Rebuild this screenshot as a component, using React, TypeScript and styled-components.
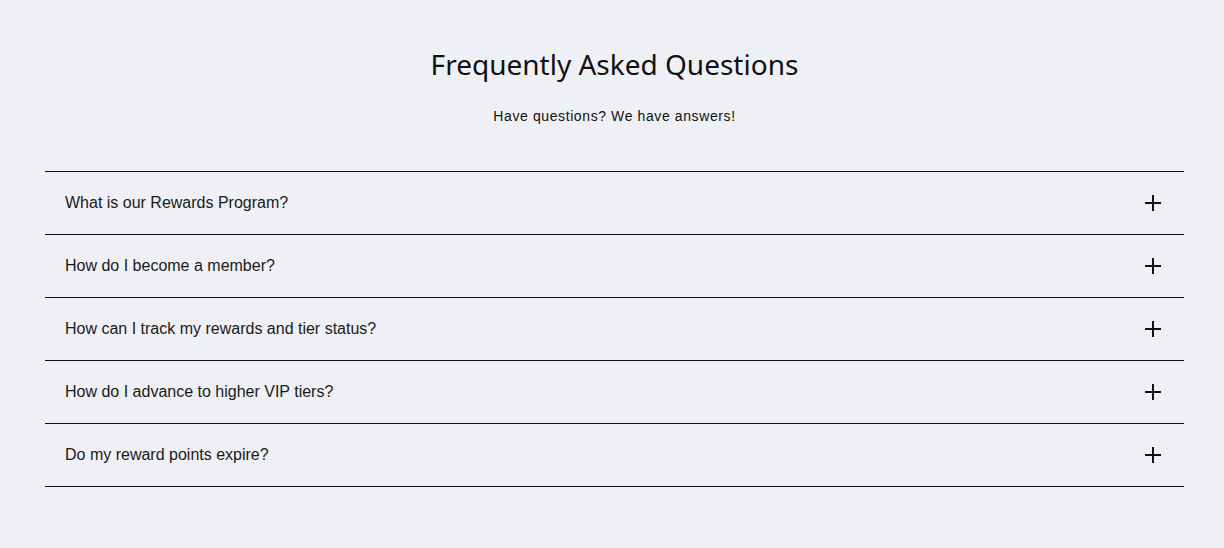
import React, { useState } from 'react';
import styled, { createGlobalStyle } from 'styled-components';

const GlobalStyle = createGlobalStyle`
  body {
    margin: 0;
    background: #eff0f5;
    font-family: 'Liberation Sans', Arial, sans-serif;
    color: #111;
  }
`;

const Page = styled.section`
  padding: 47px 40px 60px 45px;
  min-height: 548px;
  box-sizing: border-box;
`;

const Title = styled.h2`
  margin: 0;
  text-align: center;
  font-family: 'Noto Sans', sans-serif;
  font-weight: 400;
  font-size: 28px;
  line-height: 34px;
  letter-spacing: 0;
  color: #111;
`;

const Subtitle = styled.p`
  margin: 25px 0 0;
  text-align: center;
  font-size: 14px;
  line-height: 20px;
  letter-spacing: 0.6px;
  color: #111;
`;

const List = styled.div`
  margin-top: 45px;
  border-top: 1px solid #111;
`;

const Item = styled.div`
  border-bottom: 1px solid #111;
`;

const Question = styled.button`
  display: flex;
  align-items: center;
  justify-content: space-between;
  width: 100%;
  height: 62px;
  padding: 0 23px 0 20px;
  border: 0;
  background: transparent;
  font-family: 'Liberation Sans', Arial, sans-serif;
  font-size: 16px;
  color: #1a1a1a;
  text-align: left;
  cursor: pointer;
`;

const Answer = styled.div`
  padding: 0 20px 20px;
  font-size: 14px;
  line-height: 22px;
`;

const PlusIcon = ({ open }: { open: boolean }) => (
  <svg width="16" height="16" viewBox="0 0 16 16" aria-hidden="true">
    <path d="M0 8h16" stroke="#111" strokeWidth="2" />
    {!open && <path d="M8 0v16" stroke="#111" strokeWidth="2" />}
  </svg>
);

const faqs = [
  'What is our Rewards Program?',
  'How do I become a member?',
  'How can I track my rewards and tier status?',
  'How do I advance to higher VIP tiers?',
  'Do my reward points expire?',
];

const App = () => {
  const [open, setOpen] = useState<number | null>(null);
  return (
    <>
      <GlobalStyle />
      <Page>
        <Title>Frequently Asked Questions</Title>
        <Subtitle>Have questions? We have answers!</Subtitle>
        <List>
          {faqs.map((q, i) => (
            <Item key={q}>
              <Question onClick={() => setOpen(open === i ? null : i)}>
                <span>{q}</span>
                <PlusIcon open={open === i} />
              </Question>
              {open === i && <Answer>More details coming soon.</Answer>}
            </Item>
          ))}
        </List>
      </Page>
    </>
  );
};

export default App;
